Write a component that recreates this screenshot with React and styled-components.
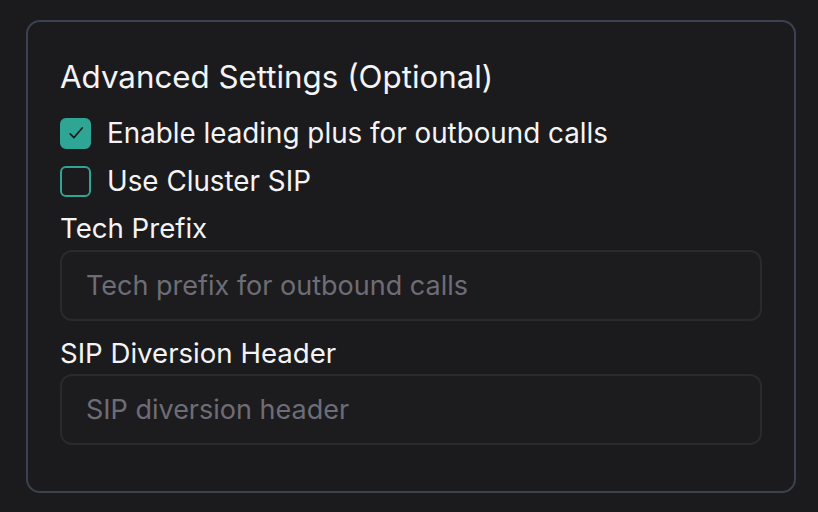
import React from "react";
import styled, { createGlobalStyle } from "styled-components";

const Global = createGlobalStyle`
  html, body { margin: 0; padding: 0; background: #1b1b1d; }
  body { font-family: Inter, "Noto Sans", sans-serif; -webkit-font-smoothing: antialiased; }
  * { box-sizing: border-box; }
`;

const Page = styled.div`
  width: 818px;
  height: 512px;
  padding: 20px 22px 19px 26px;
`;

const Card = styled.section`
  width: 770px;
  height: 473px;
  border: 2px solid #3a414f;
  border-radius: 14px;
  background: #1b1b1d;
  padding: 37px 32px 0 32px;
  display: flex;
  flex-direction: column;
`;

const Title = styled.h2`
  margin: 0;
  font-size: 31.3px;
  line-height: 36px;
  font-weight: 400;
  color: #f4f4f6;
`;

const CheckRow = styled.label`
  display: flex;
  align-items: center;
  gap: 16px;
  height: 36px;
  margin-top: ${(p) => p.$mt}px;
  font-size: 27.8px;
  font-weight: 400;
  color: #f4f4f6;
`;

const Box = styled.span`
  width: 31px;
  height: 31px;
  border-radius: 6px;
  flex: none;
  display: flex;
  align-items: center;
  justify-content: center;
  background: ${(p) => (p.$checked ? "#2fa596" : "transparent")};
  border: 2px solid #2fa596;
`;

const Label = styled.div`
  margin-top: ${(p) => p.$mt}px;
  font-size: 27.6px;
  line-height: 36px;
  font-weight: 400;
  color: #f4f4f6;
`;

const Input = styled.input`
  margin-top: ${(p) => p.$mt}px;
  width: 702px;
  height: 71px;
  border: 2px solid #2a2a2d;
  border-radius: 12px;
  background: #1c1c1e;
  padding: 0 24px;
  font-family: inherit;
  font-size: 27px;
  color: #f4f4f6;
  outline: none;
  &::placeholder { color: #6e6d76; }
`;

const Check = () => (
  <svg width="20" height="20" viewBox="0 0 24 24" fill="none" stroke="#1b1b1d" strokeWidth="2" strokeLinecap="round" strokeLinejoin="round">
    <path d="M5 13l4.5 4.5L19.5 6" />
  </svg>
);

export default function App() {
  return (
    <>
      <Global />
      <Page>
        <Card>
          <Title>Advanced Settings (Optional)</Title>
          <CheckRow $mt={20}>
            <Box $checked><Check /></Box>
            Enable leading plus for outbound calls
          </CheckRow>
          <CheckRow $mt={12}>
            <Box />
            Use Cluster SIP
          </CheckRow>
          <Label $mt={11}>Tech Prefix</Label>
          <Input $mt={4} placeholder="Tech prefix for outbound calls" />
          <Label $mt={14}>SIP Diversion Header</Label>
          <Input $mt={3} placeholder="SIP diversion header" />
        </Card>
      </Page>
    </>
  );
}
